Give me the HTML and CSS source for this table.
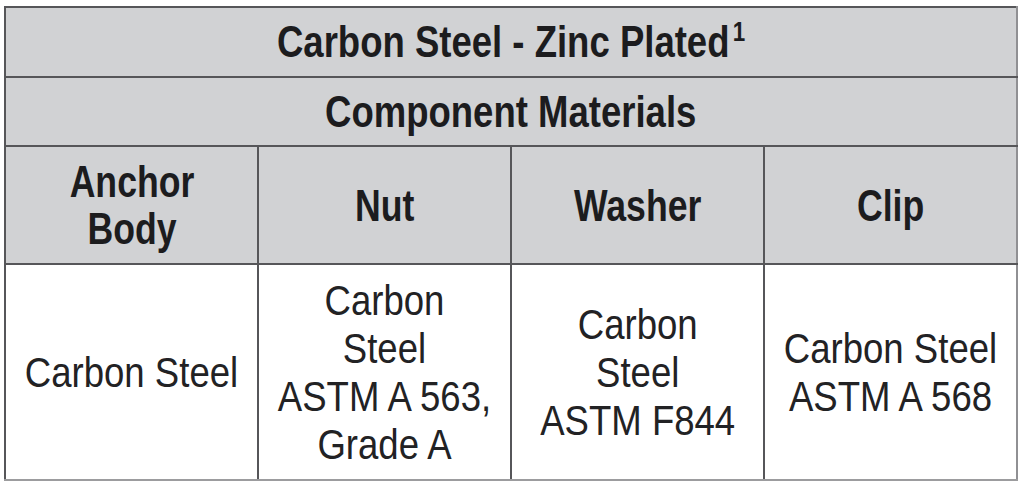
FILE: index.html
```html
<!DOCTYPE html>
<html>
<head>
<meta charset="utf-8">
<link rel="stylesheet" href="styles.css">
</head>
<body>
<table class="spec">
  <colgroup>
    <col class="c1"><col class="c2"><col class="c3"><col class="c4">
  </colgroup>
  <tr class="r-title"><th colspan="4"><span class="cond">Carbon Steel - Zinc Plated<sup>1</sup></span></th></tr>
  <tr class="r-sub"><th colspan="4"><span class="cond">Component Materials</span></th></tr>
  <tr class="r-head">
    <th><span class="cond">Anchor<br>Body</span></th>
    <th><span class="cond">Nut</span></th>
    <th><span class="cond">Washer</span></th>
    <th><span class="cond">Clip</span></th>
  </tr>
  <tr class="r-body">
    <td><span class="cond">Carbon Steel</span></td>
    <td><span class="cond">Carbon<br>Steel<br>ASTM A 563,<br>Grade A</span></td>
    <td><span class="cond">Carbon<br>Steel<br>ASTM F844</span></td>
    <td><span class="cond">Carbon Steel<br>ASTM A 568</span></td>
  </tr>
</table>
</body>
</html>
```
FILE: styles.css
```css
html, body {
  margin: 0;
  padding: 0;
  background: #ffffff;
}
body {
  padding: 6px 6px 0 4px;
  font-family: "Liberation Sans", Arial, sans-serif;
  color: #1a1a1a;
}
.spec {
  width: 1014px;
  border-collapse: collapse;
  table-layout: fixed;
}
.spec th, .spec td {
  border: 2px solid #565659;
  text-align: center;
  vertical-align: middle;
  padding: 0;
  overflow: visible;
}
.spec th {
  background: #d1d2d4;
  font-weight: bold;
  color: #1c1c1e;
}
.spec td {
  background: #ffffff;
  font-weight: normal;
  color: #222224;
}
.cond {
  display: inline-block;
  white-space: nowrap;
  margin: 0 -60px;
  transform: scaleX(0.85);
  transform-origin: 50% 50%;
}
th .cond {
  transform: scaleX(0.83);
}
.r-head th .cond {
  transform: scaleX(0.81);
}
.r-body td {
  border-bottom-color: #9c9c9e;
}
.r-title th, .r-sub th, .r-body td:last-child, .r-head th:last-child {
  border-right-color: #909093;
}
.r-title th { height: 68px; font-size: 44px; line-height: 50px; }
.r-sub th { height: 67px; font-size: 44px; line-height: 50px; }
.r-head th { height: 116px; font-size: 44px; line-height: 47px; }
.r-body td { height: 214px; font-size: 43px; line-height: 48px; }
sup {
  font-size: 27px;
  font-weight: bold;
  line-height: 0;
  vertical-align: top;
  position: relative;
  top: 15px;
  margin-left: 4px;
}
```
